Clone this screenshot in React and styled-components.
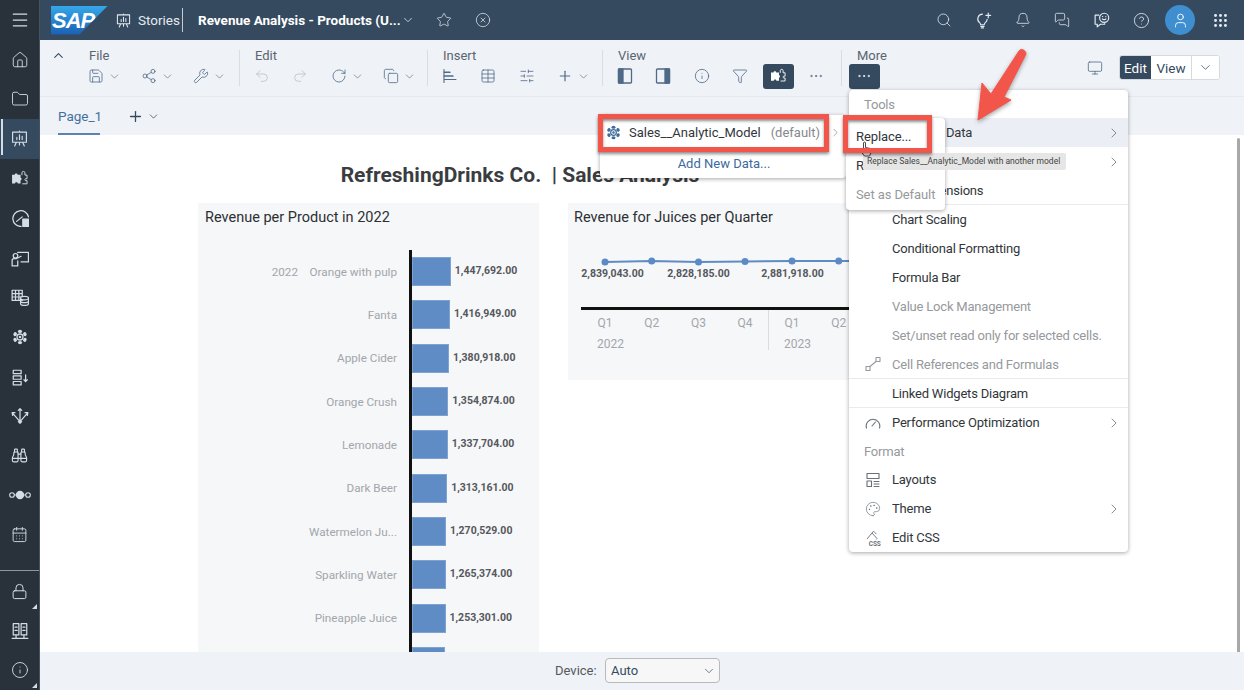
import React from 'react';
import styled, { createGlobalStyle } from 'styled-components';
import {
  Menu, Home, Folder, Search, Bell, MessagesSquare, HelpCircle, User, Grip, Star, XCircle,
  Save, Share2, Wrench, Undo2, Redo2, RotateCw, Copy, Table, SlidersHorizontal, Plus, Info, Filter, MoreHorizontal, Monitor,
  Binoculars, CalendarDays, Lock, Palette, ChevronUp, ChevronDown, ChevronRight,
} from 'lucide-react';

const Global = createGlobalStyle`
  html, body { margin: 0; padding: 0; width: 1244px; height: 690px; overflow: hidden; background: #fff; }
  body { font-family: Roboto, "Liberation Sans", sans-serif; color: #32363a; }
`;

const Svg = ({ s = 16, children, fill = 'none', sw = 1.1 }) => (
  <svg width={s} height={s} viewBox="0 0 16 16" fill={fill} stroke="currentColor" strokeWidth={sw} strokeLinecap="round" strokeLinejoin="round">{children}</svg>
);
const StoryIcon = ({ s = 16 }) => (
  <Svg s={s}>
    <path d="M1.500 2h13v9.500h-13zM8 1v1M5 11.500L3.500 15M11 11.500l1.500 3.500M8 11.500V14" />
    <path d="M5.500 9V7M8 9V4.500M10.500 9V6" />
  </Svg>
);
const PuzzleSolid = ({ s = 16 }) => (
  <Svg s={s} sw={0.9}>
    <path fill="currentColor" stroke="none" d="M1 4.500h2.600c-.5-1.700 3-1.700 2.500 0H9v2.800c1.300-.5 1.300 2.700 0 2.200v3.300H6.300c.5-1.600-2.900-1.600-2.400 0H1z" />
    <path d="M10.300 4.500V2.600c0-1.700 2.800-1.700 2.800 0v2.200h2v3.400h-1.300c-.9 0-.9 1.800 0 1.800h1.300v3H11" />
  </Svg>
);
const GaugeCalc = () => (
  <Svg s={18}>
    <path d="M9 15.500A7 7 0 1 1 15.500 7" /><path d="M5 11l5-4" />
    <rect x="10.500" y="9" width="5" height="6.500" fill="currentColor" />
  </Svg>
);
const Teacher = () => (
  <Svg s={18}>
    <path d="M6 3h9.500v8.500H9" /><circle cx="4" cy="6" r="2" /><path d="M1 15V10c0-1 1-1.500 2-1.500h2L9 6.500M6 10.500V15H1" />
  </Svg>
);
const TableDb = () => (
  <Svg s={18}>
    <path d="M1 2h9v9H1zM1 5h9M1 8h9M4 2v9M7 2v9" />
    <ellipse cx="12" cy="9" rx="3.500" ry="1.500" fill="#29313a" /><path d="M8.500 9v5c0 2 7 2 7 0V9M8.500 11.500c0 2 7 2 7 0" />
  </Svg>
);
const ModelHex = ({ s = 16 }) => (
  <svg width={s} height={s} viewBox="0 0 16 16" fill="currentColor">
    {[0, 60, 120, 180, 240, 300].map(a => (
      <ellipse key={a} cx="8" cy="2.400" rx="2.100" ry="1.700" transform={`rotate(${a} 8 8)`} />
    ))}
    <circle cx="8" cy="8" r="3" fill="none" stroke="currentColor" strokeWidth="1.300" />
    <circle cx="8" cy="8" r="1.300" />
  </svg>
);
const RowsDown = () => (
  <Svg s={18}>
    <path d="M2 2h7v3H2zM2 7h7v3H2zM2 12h7v3H2zM13 6v6M11.500 10.500L13 12l1.500-1.500" />
  </Svg>
);
const Arrows = () => (
  <Svg s={18}>
    <path d="M8 1.500v13M6.500 3L8 1.500 9.500 3M6.500 13L8 14.500 9.500 13M1 5l7 8 7-8M1 5h2.500M1 5l.5 2.500M15 5h-2.500M15 5l-.5 2.500" />
  </Svg>
);
const Nodes = () => (
  <svg width="22" height="12" viewBox="0 0 22 12" fill="none" stroke="currentColor" strokeWidth="1.100">
    <circle cx="3" cy="6" r="2.300" /><circle cx="19" cy="6" r="2.300" /><circle cx="11" cy="6" r="3.600" fill="currentColor" /><path d="M5 6h3M14 6h3" />
  </svg>
);
const Racks = () => (
  <Svg s={18}>
    <path d="M2 1.500h5v10H2zM9 1.500h5v10H9zM4.500 11.500V14M11.500 11.500V14M1 14.500h14M3.500 4.500h2M10.500 4.500h2M3.500 7.500h2M10.500 7.500h2" />
  </Svg>
);
const BarsLeft = () => (
  <Svg><path d="M2 1.500v13M2 4.500h6M2 8h9M2 11.500h12" /><path d="M2 4h6M2 8h9" /></Svg>
);
const PanelSide = ({ $right }) => (
  <Svg s={16} sw={1.300}>
    <rect x="1.500" y="1" width="13" height="14" rx="1" />
    <rect x={$right ? 10 : 1.500} y="1" width="4.500" height="14" fill="currentColor" />
  </Svg>
);
const BulbSpark = () => (
  <Svg s={17}>
    <path d="M7 2a4.500 4.500 0 0 0-2.700 8c.7.600 1 1.200 1 2h3.400c0-.8.300-1.400 1-2 1-.8 1.600-1.800 1.700-3" />
    <path d="M5.500 13.500h3M6 15h2M12.500 1v4.500M10.300 3.200h4.400" />
  </Svg>
);
const FeedbackChat = () => (
  <Svg s={17}>
    <path d="M5.500 3H2v8.500h2V14l3-2.500h4V11" />
    <circle cx="10.500" cy="5.500" r="4.300" />
    <path d="M8.800 6.500c.8 1 2.600 1 3.400 0M9 4.300h.1M12 4.300h.1" />
  </Svg>
);
const CellRef = () => (
  <Svg><rect x="1" y="10.500" width="4" height="4" /><rect x="11" y="1.500" width="4" height="4" /><path d="M5 10.500L11 5.500" /></Svg>
);
const GaugeOpen = () => (
  <Svg><path d="M1.500 13a6.800 6.800 0 1 1 13 0" /><path d="M7 11l3.500-4" /></Svg>
);
const LayoutsIcon = () => (
  <Svg><path d="M2 1.500h12v5H2zM2 9h4.500v5.500H2zM9 9.500h5M9 12h5M9 14.500h5" /></Svg>
);
const CssIcon = () => (
  <svg width="16" height="16" viewBox="0 0 16 16" fill="none" stroke="currentColor" strokeWidth="0.900">
    <path d="M2 9l5-6 5 5.500-.8 1" /><path d="M7 3l1.500-1.800 3 3" />
    <text x="15.500" y="15.500" textAnchor="end" fontSize="6.500" fontWeight="700" fill="currentColor" stroke="none" fontFamily="Roboto, sans-serif">CSS</text>
  </svg>
);
const HandCursor = () => (
  <svg width="14" height="16" viewBox="0 0 14 16" fill="#fff" stroke="#333" strokeWidth="0.900" strokeLinejoin="round">
    <path d="M4.500 8V2c0-1.300 2-1.300 2 0v4.500l4 .8c1 .2 1.500.8 1.500 1.700v2.500L10.500 15h-5L2 10.500c-.8-1 .4-2.200 1.400-1.300z" />
  </svg>
);

const Shell = styled.div`
  display: grid;
  grid-template-columns: 40px 1fr;
  width: 1244px;
  height: 690px;
  position: relative;
  overflow: hidden;
`;

const Rail = styled.nav`
  display: flex;
  flex-direction: column;
  background: #29313a;
  color: #d3dde8;
  border-right: 1px solid #46525f;
  box-sizing: border-box;
`;
const RailItem = styled.div`
  height: ${p => p.$h || 39.600}px;
  flex: none;
  display: flex;
  align-items: center;
  justify-content: center;
  position: relative;
  background: ${p => (p.$active ? '#354a5f' : 'transparent')};
  ${p => p.$active && `
    &::before {
      content: '';
      position: absolute;
      left: 1px;
      top: 0;
      bottom: 4px;
      width: 2px;
      background: #d3dde8;
    }
  `}
  ${p => p.$corner && `
    &::after {
      content: '';
      position: absolute;
      right: 2px;
      bottom: 2px;
      border-left: 5px solid transparent;
      border-bottom: 5px solid #d3dde8;
    }
  `}
`;
const RailSpacer = styled.div`
  flex: 1;
  border-bottom: 1px solid #8c96a0;
`;

const Main = styled.div`
  display: flex;
  flex-direction: column;
  min-width: 0;
  height: 690px;
`;

const TopBar = styled.header`
  height: 40px;
  flex: none;
  background: #354a5f;
  display: flex;
  align-items: center;
  color: #e3eaf2;
  padding-left: 11px;
  padding-right: 12px;
  box-sizing: border-box;
`;
const Logo = styled.div`
  width: 57px;
  height: 29px;
  flex: none;
  background: linear-gradient(180deg, #35a8ea 0%, #1b5fb3 100%);
  clip-path: polygon(0 0, 100% 0, 50% 100%, 0 100%);
  color: #fff;
  font: italic 900 22px/29px "Liberation Sans", sans-serif;
  letter-spacing: -1px;
  padding-left: 1px;
  box-sizing: border-box;
`;
const Crumb = styled.span`
  font-size: 13.500px;
  margin-left: 7px;
  width: 37px;
  flex: none;
  white-space: nowrap;
  color: #e3eaf2;
`;
const BarDivider = styled.span`
  width: 1px;
  height: 24px;
  background: #c3ccd6;
  margin: 0 15px 0 7px;
  flex: none;
`;
const DocTitle = styled.span`
  font-size: 13.500px;
  font-weight: 700;
  color: #fff;
  width: 199px;
  flex: none;
  white-space: nowrap;
`;
const TopIcon = styled.span`
  display: flex;
  width: ${p => p.$w || 39.500}px;
  justify-content: center;
  margin-left: ${p => p.$ml || 0}px;
  flex: none;
`;
const RightIcons = styled.div`
  margin-left: auto;
  display: flex;
  align-items: center;
`;
const Avatar = styled.span`
  width: 30px;
  height: 30px;
  border-radius: 50%;
  background: #3f8fd0;
  display: flex;
  align-items: center;
  justify-content: center;
  margin: 0 13px 0 4px;
  color: #fff;
`;

const Toolbar = styled.div`
  height: 57px;
  flex: none;
  background: #eff2f7;
  display: flex;
  box-sizing: border-box;
  padding: 8px 24px 0 11px;
  border-bottom: 1px solid #e6e9ee;
`;
const Collapse = styled.div`
  width: 37px;
  flex: none;
  color: #354a5f;
`;
const Group = styled.div`
  width: ${p => p.$w}px;
  flex: none;
`;
const GroupLabel = styled.div`
  font-size: 13px;
  line-height: 16px;
  color: #5a6570;
  padding-left: 1px;
`;
const ToolRow = styled.div`
  display: flex;
  height: 24px;
  align-items: center;
`;
const Tool = styled.span`
  position: relative;
  flex: none;
  display: flex;
  align-items: center;
  gap: 4px;
  width: ${p => (p.$chev ? 52.500 : 38.300)}px;
  color: ${p => (p.$active ? '#fff' : p.$off ? '#b4c1cf' : '#4f6a86')};
  & > svg { position: relative; flex: none; }
  ${p => p.$active && `
    &::before {
      content: '';
      position: absolute;
      left: -7.500px;
      width: 31px;
      height: 25px;
      top: -4.500px;
      background: #354a5f;
      border-radius: 3px;
    }
  `}
`;
const SmallChev = styled(ChevronDown)`
  color: #5f7891;
`;
const ToolSep = styled.div`
  width: 1px;
  height: 36px;
  flex: none;
  background: #d9dde3;
  margin: 2px 14px 0 0;
`;
const ViewSwitch = styled.div`
  margin-left: auto;
  display: flex;
  align-items: center;
  height: 25px;
  margin-top: 7px;
  gap: 16px;
  color: #4f6a86;
`;
const Segmented = styled.div`
  display: flex;
  height: 25px;
  border-radius: 3px;
  border: 1px solid #d5dae0;
  box-sizing: border-box;
  background: #fff;
  overflow: hidden;
`;
const Seg = styled.span`
  width: ${p => p.$w}px;
  display: flex;
  align-items: center;
  justify-content: center;
  font-size: 13.500px;
  background: ${p => (p.$on ? '#354a5f' : '#fff')};
  color: ${p => (p.$on ? '#fff' : '#354a5f')};
  border-left: ${p => (p.$div ? '1px solid #d5dae0' : '0')};
`;

const TabBar = styled.div`
  height: 38px;
  flex: none;
  background: #eff2f7;
  display: flex;
  align-items: stretch;
  padding-left: 18px;
  box-sizing: border-box;
  color: #354a5f;
`;
const Tab = styled.div`
  width: 42px;
  font-size: 13.500px;
  color: #45709e;
  line-height: 38px;
  box-sizing: border-box;
  border-bottom: 2px solid #5d82ab;
  white-space: nowrap;
`;
const TabAdd = styled.div`
  display: flex;
  align-items: center;
  gap: 3px;
  margin-left: 27px;
`;

const Canvas = styled.main`
  flex: 1;
  min-height: 0;
  position: relative;
  overflow: hidden;
  background: #fff;
  padding: 27px 0 0 158px;
  box-sizing: border-box;
`;
const StoryTitle = styled.h1`
  margin: 0 0 15px;
  width: 644px;
  text-align: center;
  font-size: 21px;
  line-height: 26px;
  font-weight: 700;
  color: #3a3d40;
  white-space: pre;
`;
const Cards = styled.div`
  display: flex;
  gap: 29px;
  align-items: flex-start;
`;
const Card = styled.section`
  width: 341px;
  flex: none;
  height: ${p => p.$h}px;
  background: #f6f7f9;
  overflow: hidden;
`;
const CardTitle = styled.h2`
  margin: 0;
  padding: 5px 7px 0;
  font-size: 14.500px;
  line-height: 20px;
  font-weight: 400;
  color: #2c2f33;
  ${p => p.$tight && 'padding-left: 6px;'}
`;
const BarRows = styled.div`
  margin-top: 22px;
`;
const BarRow = styled.div`
  display: flex;
  height: 43.330px;
  align-items: center;
`;
const BarLabel = styled.div`
  width: 199px;
  flex: none;
  text-align: right;
  font-size: 11.700px;
  color: #a2a6ab;
  white-space: pre;
`;
const BarTrack = styled.div`
  margin-left: 11.500px;
  border-left: 3px solid #111;
  height: 100%;
  display: flex;
  align-items: center;
  gap: 4px;
`;
const Bar = styled.div`
  height: 29px;
  background: #5f8cc5;
  box-shadow: inset 0 0 0 1px #7ea3d2;
`;
const BarValue = styled.span`
  font-size: 10.500px;
  font-weight: 700;
  color: #55585c;
  position: relative;
  top: -1px;
`;
const ChartSvg = styled.svg`
  display: block;
  margin-top: 4px;
  font-family: Roboto, "Liberation Sans", sans-serif;
`;
const Scrollbar = styled.div`
  position: absolute;
  right: 4px;
  top: 3px;
  bottom: 0;
  width: 3px;
  background: #a8a8a8;
  border-radius: 2px 2px 0 0;
`;

const Footer = styled.footer`
  height: 38px;
  flex: none;
  background: #eff2f7;
  display: flex;
  align-items: center;
  padding-left: 515px;
  padding-bottom: 1px;
  box-sizing: border-box;
  gap: 9px;
  font-size: 13px;
  color: #55585c;
`;
const DeviceLabel = styled.span`
  width: 41px;
  white-space: nowrap;
`;
const Select = styled.div`
  width: 115px;
  height: 25px;
  box-sizing: border-box;
  border: 1px solid #b6babf;
  border-radius: 4px;
  background: #f7f7f7;
  display: flex;
  align-items: center;
  justify-content: space-between;
  padding: 0 3px 0 5px;
  color: #354a5f;
`;

const Panel = styled.div`
  position: absolute;
  background: #fff;
  border-radius: 4px;
  box-shadow: 0 1px 4px rgba(0, 0, 0, 0.35);
  box-sizing: border-box;
`;
const MainMenu = styled(Panel)`
  left: 849px;
  top: 90px;
  width: 279px;
  height: 462px;
  font-size: 13px;
  letter-spacing: -0.200px;
  color: #32363a;
`;
const MenuHead = styled.div`
  height: 28px;
  padding-left: 15px;
  display: flex;
  align-items: center;
  color: #96999d;
`;
const MenuRow = styled.div`
  height: 29px;
  display: flex;
  align-items: center;
  position: relative;
  box-sizing: border-box;
  padding-left: ${p => 43 + (p.$indent || 0)}px;
  background: ${p => (p.$hover ? '#ebeff5' : 'transparent')};
  color: ${p => (p.$off ? '#96999d' : '#32363a')};
  border-bottom: ${p => (p.$line ? '1px solid #e8eaed' : '0')};
  white-space: nowrap;
`;
const MenuIcon = styled.span`
  position: absolute;
  left: 16px;
  display: flex;
  color: ${p => (p.$off ? '#96999d' : '#6a7076')};
`;
const MenuArrow = styled.span`
  position: absolute;
  right: 6px;
  display: flex;
  color: #6a7076;
`;
const DataPopup = styled(Panel)`
  left: 600px;
  top: 115px;
  width: 246px;
  height: 63px;
  font-size: 13px;
`;
const ModelRow = styled.div`
  height: 34px;
  display: flex;
  align-items: center;
  padding: 0 6px;
  gap: 8px;
  color: #32363a;
  box-sizing: border-box;
`;
const ModelIcon = styled.span`
  display: flex;
  color: #3f6a9a;
`;
const Muted = styled.span`
  color: #85888c;
  margin-left: auto;
  padding-right: 20px;
`;
const DataChevron = styled.span`
  position: absolute;
  right: 4px;
  display: flex;
  color: #7a8086;
`;
const AddData = styled.div`
  text-align: center;
  color: #3a6a9e;
  line-height: 29px;
  padding-left: 2px;
`;
const SubMenu = styled(Panel)`
  left: 846px;
  top: 118px;
  width: 99px;
  height: 92px;
  padding-top: 3.500px;
  font-size: 13px;
  letter-spacing: -0.100px;
  color: #32363a;
`;
const SubRow = styled.div`
  height: 29px;
  padding-left: 10px;
  display: flex;
  align-items: center;
  color: ${p => (p.$off ? '#96999d' : '#32363a')};
  white-space: nowrap;
`;
const Tip = styled.div`
  position: absolute;
  left: 863px;
  top: 153px;
  width: 203px;
  height: 17px;
  background: #e6e6e6;
  border-radius: 2px;
  font-size: 8.500px;
  line-height: 17px;
  padding-left: 4px;
  box-sizing: border-box;
  color: #444;
  white-space: nowrap;
`;
const Cursor = styled.span`
  position: absolute;
  left: 859px;
  top: 141px;
  display: flex;
`;
const RedBox = styled.div`
  position: absolute;
  left: ${p => p.$x}px;
  top: ${p => p.$y}px;
  width: ${p => p.$w}px;
  height: ${p => p.$h}px;
  box-sizing: border-box;
  border: 5px solid #f2564a;
  box-shadow: 0 2px 3px rgba(0, 0, 0, 0.45), inset 0 2px 3px rgba(0, 0, 0, 0.45);
`;
const Arrow = styled.svg`
  position: absolute;
  left: 970px;
  top: 45px;
  filter: drop-shadow(0 2px 2px rgba(0, 0, 0, 0.35));
`;

const railTop = [
  { icon: <Home size={18} strokeWidth={1.200} /> },
  { icon: <Folder size={18} strokeWidth={1.200} /> },
  { icon: <StoryIcon s={17} />, active: true },
  { icon: <PuzzleSolid s={17} /> },
  { icon: <GaugeCalc /> },
  { icon: <Teacher /> },
  { icon: <TableDb /> },
  { icon: <ModelHex s={16} /> },
  { icon: <RowsDown /> },
  { icon: <Arrows /> },
  { icon: <Binoculars size={17} strokeWidth={1.600} /> },
  { icon: <Nodes /> },
  { icon: <CalendarDays size={17} strokeWidth={1.300} /> },
];

const bars = [
  ['2022    Orange with pulp', 1447692],
  ['Fanta', 1416949],
  ['Apple Cider', 1380918],
  ['Orange Crush', 1354874],
  ['Lemonade', 1337704],
  ['Dark Beer', 1313161],
  ['Watermelon Ju...', 1270529],
  ['Sparkling Water', 1265374],
  ['Pineapple Juice', 1253301],
  ['', 1240000],
];

const quarters = [
  { x: 37, y: 30, q: 'Q1', value: '2,839,043.00', vx: 44.500 },
  { x: 83.700, y: 29, q: 'Q2' },
  { x: 130.500, y: 30, q: 'Q3', value: '2,828,185.00', vx: 130.500 },
  { x: 177, y: 29.500, q: 'Q4' },
  { x: 224, y: 29, q: 'Q1', value: '2,881,918.00', vx: 224.500 },
  { x: 270.700, y: 29, q: 'Q2' },
];

const tools = (list) => list.map((t, i) => (
  <Tool key={i} $chev={t.chev} $off={t.off} $active={t.active}>
    {t.icon}
    {t.chev && <SmallChev size={13} strokeWidth={1.300} />}
  </Tool>
));

const s = { size: 16, strokeWidth: 1.200 };

export default function App() {
  return (
    <Shell>
      <Global />
      <Rail>
        <RailItem $h={40}><Menu size={20} strokeWidth={1.500} /></RailItem>
        {railTop.map((r, i) => <RailItem key={i} $active={r.active}>{r.icon}</RailItem>)}
        <RailSpacer />
        <RailItem $corner><Lock size={17} strokeWidth={1.400} /></RailItem>
        <RailItem><Racks /></RailItem>
        <RailItem $corner><Info size={18} strokeWidth={1.200} /></RailItem>
      </Rail>

      <Main>
        <TopBar>
          <Logo>SAP</Logo>
          <TopIcon $w={16} $ml={7}><StoryIcon s={15} /></TopIcon>
          <Crumb>Stories</Crumb>
          <BarDivider />
          <DocTitle>Revenue Analysis - Products (U...</DocTitle>
          <TopIcon $w={22}><ChevronDown size={14} strokeWidth={1.300} /></TopIcon>
          <TopIcon $w={50}><Star size={16} strokeWidth={1.100} /></TopIcon>
          <TopIcon $w={28}><XCircle size={16} strokeWidth={1.100} /></TopIcon>
          <RightIcons>
            <TopIcon><Search size={16} strokeWidth={1.200} /></TopIcon>
            <TopIcon><BulbSpark /></TopIcon>
            <TopIcon><Bell size={16} strokeWidth={1.200} /></TopIcon>
            <TopIcon><MessagesSquare size={16} strokeWidth={1.200} /></TopIcon>
            <TopIcon><FeedbackChat /></TopIcon>
            <TopIcon><HelpCircle size={17} strokeWidth={1.200} /></TopIcon>
            <Avatar><User size={17} strokeWidth={1.300} /></Avatar>
            <TopIcon $w={24}><Grip size={17} strokeWidth={2.200} /></TopIcon>
          </RightIcons>
        </TopBar>

        <Toolbar>
          <Collapse><ChevronUp size={15} strokeWidth={1.700} /></Collapse>
          <Group $w={151}>
            <GroupLabel>File</GroupLabel>
            <ToolRow>{tools([{ icon: <Save {...s} />, chev: true }, { icon: <Share2 {...s} />, chev: true }, { icon: <Wrench {...s} />, chev: true }])}</ToolRow>
          </Group>
          <ToolSep />
          <Group $w={173}>
            <GroupLabel>Edit</GroupLabel>
            <ToolRow>{tools([{ icon: <Undo2 {...s} />, off: true }, { icon: <Redo2 {...s} />, off: true }, { icon: <RotateCw {...s} />, chev: true }, { icon: <Copy {...s} />, chev: true }])}</ToolRow>
          </Group>
          <ToolSep />
          <Group $w={160}>
            <GroupLabel>Insert</GroupLabel>
            <ToolRow>{tools([{ icon: <BarsLeft /> }, { icon: <Table {...s} /> }, { icon: <SlidersHorizontal {...s} /> }, { icon: <Plus size={16} strokeWidth={1.800} />, chev: true }])}</ToolRow>
          </Group>
          <ToolSep />
          <Group $w={224}>
            <GroupLabel>View</GroupLabel>
            <ToolRow>{tools([{ icon: <PanelSide /> }, { icon: <PanelSide $right /> }, { icon: <Info {...s} /> }, { icon: <Filter {...s} /> }, { icon: <PuzzleSolid />, active: true }, { icon: <MoreHorizontal {...s} /> }])}</ToolRow>
          </Group>
          <ToolSep />
          <Group $w={60}>
            <GroupLabel>More</GroupLabel>
            <ToolRow>{tools([{ icon: <MoreHorizontal {...s} />, active: true }])}</ToolRow>
          </Group>
          <ViewSwitch>
            <Monitor size={16} strokeWidth={1.200} />
            <Segmented>
              <Seg $w={31} $on>Edit</Seg>
              <Seg $w={40}>View</Seg>
              <Seg $w={27} $div><ChevronDown size={15} strokeWidth={1.200} /></Seg>
            </Segmented>
          </ViewSwitch>
        </Toolbar>

        <TabBar>
          <Tab>Page_1</Tab>
          <TabAdd>
            <Plus size={17} strokeWidth={1.800} />
            <ChevronDown size={13} strokeWidth={1.400} />
          </TabAdd>
        </TabBar>

        <Canvas>
          <StoryTitle>{'RefreshingDrinks Co.  | Sales Analysis'}</StoryTitle>
          <Cards>
            <Card $h={460}>
              <CardTitle>Revenue per Product in 2022</CardTitle>
              <BarRows>
                {bars.map(([label, v]) => (
                  <BarRow key={v}>
                    <BarLabel>{label}</BarLabel>
                    <BarTrack>
                      <Bar style={{ width: v * 39.300 / 1447692 }} />
                      {label && <BarValue>{v.toLocaleString('en-US')}.00</BarValue>}
                    </BarTrack>
                  </BarRow>
                ))}
              </BarRows>
            </Card>
            <Card $h={177}>
              <CardTitle $tight>Revenue for Juices per Quarter</CardTitle>
              <ChartSvg width="341" height="144" viewBox="0 0 341 144">
                <polyline points={quarters.map(q => `${q.x},${q.y}`).join(' ') + ' 300,29'} fill="none" stroke="#5f8cc5" strokeWidth="2" />
                {quarters.map((q, i) => (
                  <g key={i}>
                    <circle cx={q.x} cy={q.y} r="3.500" fill="#5b8ac6" />
                    {q.value && <text x={q.vx} y="45" textAnchor="middle" fontSize="10.500" fontWeight="700" fill="#55585c">{q.value}</text>}
                    <text x={q.x} y="95" textAnchor="middle" fontSize="12" fill="#a2a6ab">{q.q}</text>
                  </g>
                ))}
                <rect x="13" y="75" width="328" height="3" fill="#111" />
                <rect x="200" y="78" width="1" height="40" fill="#dcdcdc" />
                <text x="29" y="116" fontSize="12" fill="#a2a6ab">2022</text>
                <text x="216" y="116" fontSize="12" fill="#a2a6ab">2023</text>
              </ChartSvg>
            </Card>
          </Cards>
          <Scrollbar />
        </Canvas>

        <Footer>
          <DeviceLabel>Device:</DeviceLabel>
          <Select>Auto<ChevronDown size={14} strokeWidth={1.200} /></Select>
        </Footer>
      </Main>

      <MainMenu>
        <MenuHead>Tools</MenuHead>
        <MenuRow $hover $indent={54}>Data<MenuArrow><ChevronRight size={16} strokeWidth={1.200} /></MenuArrow></MenuRow>
        <MenuRow><MenuArrow><ChevronRight size={16} strokeWidth={1.200} /></MenuArrow></MenuRow>
        <MenuRow $line $indent={25}>Dimensions</MenuRow>
        <MenuRow>Chart Scaling</MenuRow>
        <MenuRow>Conditional Formatting</MenuRow>
        <MenuRow>Formula Bar</MenuRow>
        <MenuRow $off>Value Lock Management</MenuRow>
        <MenuRow $off>Set/unset read only for selected cells.</MenuRow>
        <MenuRow $off $line><MenuIcon $off><CellRef /></MenuIcon>Cell References and Formulas</MenuRow>
        <MenuRow $line>Linked Widgets Diagram</MenuRow>
        <MenuRow><MenuIcon><GaugeOpen /></MenuIcon>Performance Optimization<MenuArrow><ChevronRight size={16} strokeWidth={1.200} /></MenuArrow></MenuRow>
        <MenuHead>Format</MenuHead>
        <MenuRow><MenuIcon><LayoutsIcon /></MenuIcon>Layouts</MenuRow>
        <MenuRow><MenuIcon><Palette size={16} strokeWidth={1} /></MenuIcon>Theme<MenuArrow><ChevronRight size={16} strokeWidth={1.200} /></MenuArrow></MenuRow>
        <MenuRow><MenuIcon><CssIcon /></MenuIcon>Edit CSS</MenuRow>
      </MainMenu>

      <DataPopup>
        <ModelRow>
          <ModelIcon><ModelHex s={15} /></ModelIcon>
          <span>Sales__Analytic_Model</span>
          <Muted>(default)</Muted>
          <DataChevron><ChevronRight size={13} strokeWidth={1.200} /></DataChevron>
        </ModelRow>
        <AddData>Add New Data...</AddData>
      </DataPopup>

      <SubMenu>
        <SubRow>Replace...</SubRow>
        <SubRow>Remove</SubRow>
        <SubRow $off>Set as Default</SubRow>
      </SubMenu>
      <Tip>Replace Sales__Analytic_Model with another model</Tip>
      <Cursor><HandCursor /></Cursor>

      <RedBox $x={598} $y={114} $w={231} $h={38} />
      <RedBox $x={843} $y={115} $w={89} $h={38} />
      <Arrow width="70" height="85" viewBox="0 0 70 85">
        <path d="M49 6c2-3 7-1 7 3L34 52l7 3-33 20 4-37 9 11z" fill="#f2564a" stroke="#f2564a" strokeWidth="1" strokeLinejoin="round" />
      </Arrow>
    </Shell>
  );
}
